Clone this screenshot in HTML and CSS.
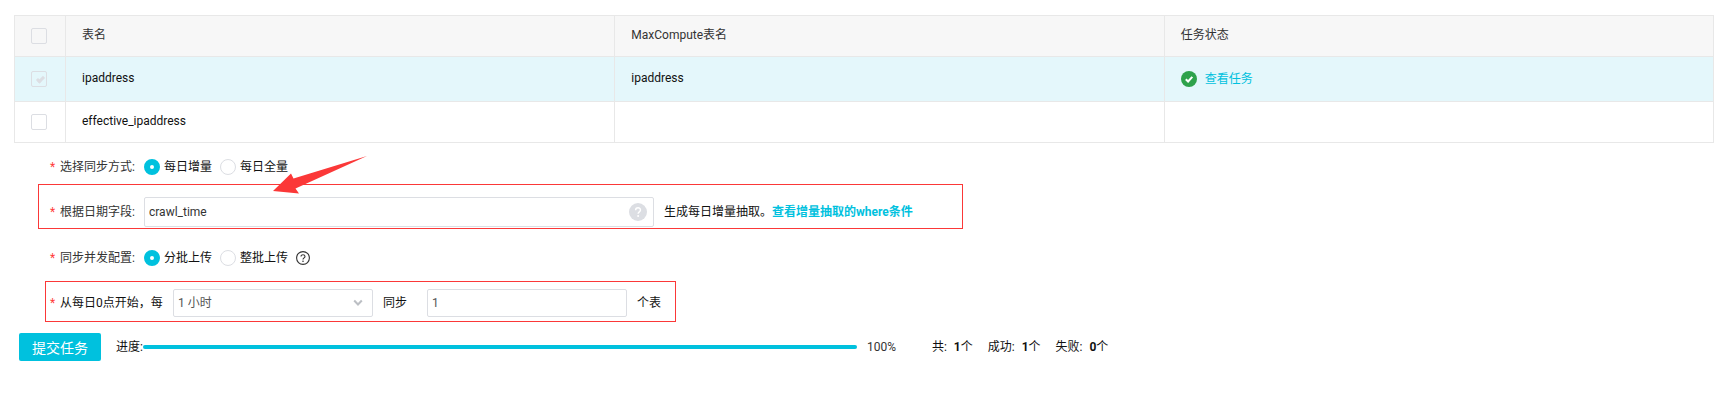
FILE: index.html
```html
<!DOCTYPE html>
<html lang="zh-CN">
<head>
    <meta charset="UTF-8">
    <title>同步任务</title>
    <link rel="stylesheet" href="styles.css">
</head>
<body>
<form class="sync">
    <table class="tables">
        <thead>
            <tr>
                <th class="check-cell"><input type="checkbox" class="check" aria-label="全选" disabled></th>
                <th>表名</th>
                <th>MaxCompute表名</th>
                <th>任务状态</th>
            </tr>
        </thead>
        <tbody>
            <tr class="selected">
                <td class="check-cell"><input type="checkbox" class="check" aria-label="ipaddress" checked disabled></td>
                <td>ipaddress</td>
                <td>ipaddress</td>
                <td class="status-cell">
                    <div class="status">
                        <svg class="status-icon" viewBox="0 0 16 16">
                            <circle cx="8" cy="8" r="8" fill="#2ea24b"/>
                            <path d="M4.8 8.2l2.3 2.3 4.2-4.7" fill="none" stroke="#fff" stroke-width="2"/>
                        </svg>
                        <a href="#">查看任务</a>
                    </div>
                </td>
            </tr>
            <tr>
                <td class="check-cell"><input type="checkbox" class="check" aria-label="effective_ipaddress"></td>
                <td>effective_ipaddress</td>
                <td></td>
                <td></td>
            </tr>
        </tbody>
    </table>

    <!-- 同步方式 -->
    <div class="row mode" role="radiogroup" aria-labelledby="mode-label">
        <span class="label" id="mode-label"><i class="star">*</i>选择同步方式:</span>
        <label class="option"><input type="radio" name="mode" class="radio" checked>每日增量</label>
        <label class="option"><input type="radio" name="mode" class="radio">每日全量</label>
    </div>

    <!-- 日期字段 -->
    <div class="row frame frame-date">
        <label class="label" for="field"><i class="star">*</i>根据日期字段:</label>
        <div class="field">
            <input type="text" id="field" class="text field-input" value="crawl_time">
            <svg class="field-help" viewBox="0 0 18 18">
                <circle cx="9" cy="9" r="9" fill="#dcdee3"/>
                <path d="M6.6 7.2c0-3.2 4.9-3.1 4.9-.2 0 1.8-2.4 1.9-2.4 3.8" fill="none" stroke="#fff" stroke-width="1.4"/>
                <circle cx="9.1" cy="13" r="1" fill="#fff"/>
            </svg>
        </div>
        <span class="tip">生成每日增量抽取。<a href="#" class="strong">查看增量抽取的where条件</a></span>
        <svg class="arrow" viewBox="0 0 94 38">
            <path d="M0 35L18 17.5l2.5 5L94 0 22.5 32.500l3.500 5z" fill="#fb3838"/>
        </svg>
    </div>

    <!-- 并发配置 -->
    <div class="row batch" role="radiogroup" aria-labelledby="batch-label">
        <span class="label" id="batch-label"><i class="star">*</i>同步并发配置:</span>
        <label class="option"><input type="radio" name="batch" class="radio" checked>分批上传</label>
        <label class="option"><input type="radio" name="batch" class="radio">整批上传</label>
        <svg class="batch-help" viewBox="0 0 14 14">
            <circle cx="7" cy="7" r="6.400" fill="none" stroke="#333" stroke-width="1.1"/>
            <path d="M5 5.600c0-2.600 4-2.500 4-.1C9 6.900 7 7 7 8.600" fill="none" stroke="#333" stroke-width="1.1"/>
            <circle cx="7" cy="10.300" r=".8" fill="#333"/>
        </svg>
    </div>

    <div class="row frame frame-batch">
        <label class="every" for="hours"><i class="star">*</i>从每日0点开始，每</label>
        <div class="picker">
            <select id="hours" class="text">
                <option>1 小时</option>
            </select>
            <svg class="picker-arrow" viewBox="0 0 10 8">
                <path d="M1.200 1.500L5 5.500l3.800-4" fill="none" stroke="#bcbfc4" stroke-width="2"/>
            </svg>
        </div>
        <label class="sync-label" for="count">同步</label>
        <input type="text" id="count" class="text count" value="1">
        <span class="unit">个表</span>
    </div>

    <div class="row footer">
        <button type="button" class="submit">提交任务</button>
        <span id="progress-label">进度:</span>
        <div class="progress" role="progressbar" aria-labelledby="progress-label" aria-valuenow="100">
            <div class="progress-bar" style="width: 100%"></div>
        </div>
        <span class="percent">100%</span>
        <div class="totals">
            <span>共: <b>1</b>个</span>
            <span>成功: <b>1</b>个</span>
            <span>失败: <b>0</b>个</span>
        </div>
    </div>
</form>
</body>
</html>
```

FILE: styles.css
```css
body{
    margin:0;
    background:#fff;
    color:#111;
    font:12px/18px Roboto, "Noto Sans CJK SC", sans-serif;
}
input, select, button{
    margin:0;
    font-family:inherit;
    box-sizing:border-box;
}
a{
    color:#00c1de;
    text-decoration:none;
}
.sync{
    margin:15px 7px 0 14px;
}

/* 表格 */
.tables{
    width:100%;
    table-layout:fixed;
    border-spacing:0;
    border-top:1px solid #e8e8e8;
    border-left:1px solid #e8e8e8;
}
.tables th, .tables td{
    height:41px;
    padding:0 16px 2px;
    box-sizing:border-box;
    border-right:1px solid #e8e8e8;
    border-bottom:1px solid #e8e8e8;
    font-weight:normal;
    text-align:left;
}
.tables th{
    background:#f7f7f7;
    color:#333;
}
.tables .selected td{
    height:45px;
    background:#e4f7fb;
}
.tables .check-cell, .tables .status-cell{
    padding-bottom:0;
}
.tables .check-cell{
    width:51px;
}
.check{
    display:block;
    width:16px;
    height:16px;
    appearance:none;
    border:1px solid #dcdee3;
    border-radius:2px;
    background:#fff;
}
.check:disabled{
    background:transparent;
}
.check:checked::after{
    content:"";
    display:block;
    width:2px;
    height:5px;
    margin:3px 0 0 6px;
    border-right:3px solid #dcdee3;
    border-bottom:3px solid #dcdee3;
    transform:rotate(45deg);
}
.status{
    display:flex;
    align-items:center;
    gap:8px;
}
.status-icon{
    width:16px;
    height:16px;
}

/* 表单 */
.row{
    display:flex;
    align-items:center;
}
.star{
    display:inline-block;
    width:10px;
    color:#ff3b3b;
    font-style:normal;
}
.label{
    width:94px;
    color:#333;
}
.mode, .batch{
    height:24px;
    padding-left:36px;
}
.mode{
    margin-top:12px;
}
.batch{
    margin-top:17px;
}
.option{
    display:flex;
    align-items:center;
    gap:4px;
    margin-right:8px;
}
.radio{
    width:16px;
    height:16px;
    appearance:none;
    border:1px solid #dcdee3;
    border-radius:50%;
    background:#fff;
}
.radio:checked{
    border:6px solid #00c1de;
}
.batch-help{
    width:14px;
    height:14px;
}
.frame{
    position:relative;
    width:fit-content;
    border:1px solid #fb3838;
}
.frame-date{
    margin:5px 0 0 24px;
    padding:12px 49px 1px 11px;
}
.frame-batch{
    margin:11px 0 0 31px;
    padding:7px 14px 4px 4px;
}
.text{
    width:200px;
    height:28px;
    padding:0 4px;
    appearance:none;
    border:1px solid #dcdee3;
    border-radius:2px;
    background:#fff;
    color:#555;
    font-size:12px;
}
.field, .picker{
    position:relative;
}
.field-input{
    display:block;
    width:510px;
    height:30px;
    color:#333;
}
.field-help{
    position:absolute;
    top:6px;
    right:7px;
    width:18px;
    height:18px;
}
.tip{
    margin-left:10px;
}
.strong{
    font-weight:bold;
}
.arrow{
    position:absolute;
    top:-29px;
    left:234px;
    width:94px;
    height:38px;
}
.every{
    width:123px;
}
.picker select{
    display:block;
}
.picker-arrow{
    position:absolute;
    top:10px;
    right:10px;
    width:10px;
    height:8px;
    pointer-events:none;
}
.sync-label{
    margin:0 20px 0 10px;
}
.unit{
    margin-left:10px;
}

/* 底部 */
.footer{
    margin-top:11px;
}
.submit{
    height:28px;
    margin:0 15px 0 5px;
    padding:0 13px;
    border:0;
    border-radius:2px;
    background:#00c1de;
    color:#fff;
    font-size:14px;
}
.progress{
    width:42%;
    border-radius:2px;
    background:#ebecf0;
}
.progress-bar{
    height:4px;
    border-radius:2px;
    background:#00c1de;
}
.percent{
    margin-left:10px;
    color:#333;
}
.totals{
    display:flex;
    gap:15px;
    margin-left:36px;
}
.totals b{
    margin-left:4px;
}
```
